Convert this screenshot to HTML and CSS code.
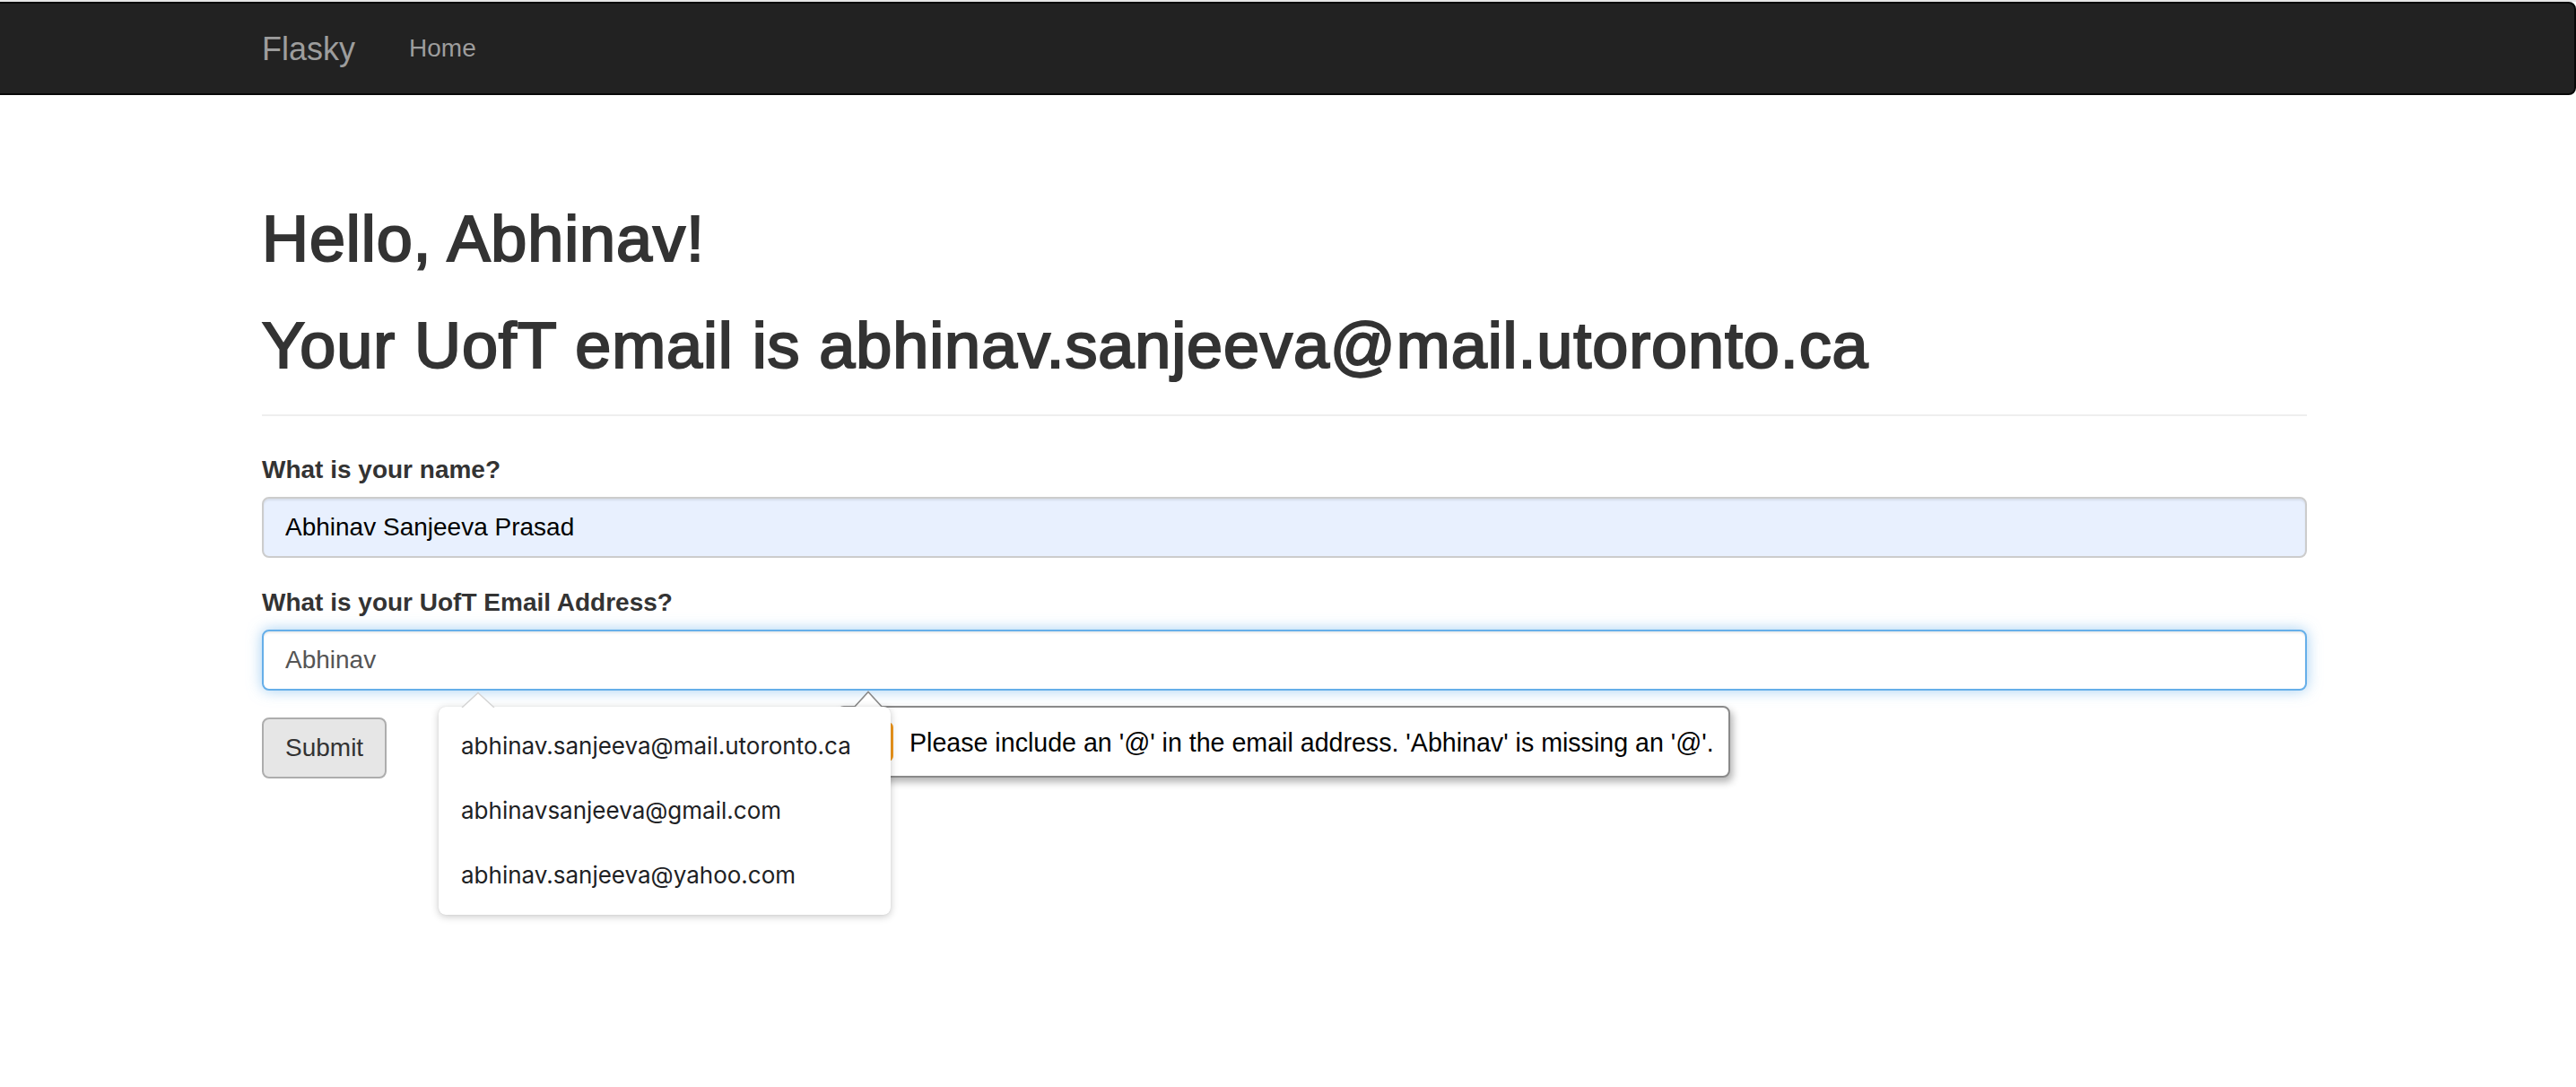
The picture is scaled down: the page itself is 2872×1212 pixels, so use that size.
FILE: index.html
```
<!DOCTYPE html>
<html lang="en">
<head>
<meta charset="utf-8">
<title>Flasky</title>
<link rel="stylesheet" href="styles.css">
</head>
<body>
<div class="topline"></div>
<nav class="navbar">
  <div class="nav-inner">
    <a class="brand" href="#">Flasky</a>
    <a class="nav-link" href="#">Home</a>
  </div>
</nav>
<main class="container">
  <div class="page-header">
    <h1>Hello, Abhinav!</h1>
    <h1>Your UofT email is abhinav.sanjeeva@mail.utoronto.ca</h1>
  </div>
  <form class="form">
    <div class="form-group">
      <label class="label">What is your name?</label>
      <input class="form-control autofilled" type="text" value="Abhinav Sanjeeva Prasad">
    </div>
    <div class="form-group email-group">
      <label class="label">What is your UofT Email Address?</label>
      <input class="form-control focused" type="text" value="Abhinav">
      <div class="bubble">
        <svg class="bubble-arrow" width="36" height="20" viewBox="0 0 36 20"><path d="M1 20 L18 1.5 L35 20" fill="#fff" stroke="#8a8a8a" stroke-width="1.6"/></svg>
        <span class="bubble-icon">!</span>
        <span class="bubble-text">Please include an '@' in the email address. 'Abhinav' is missing an '@'.</span>
      </div>
      <div class="autocomplete">
        <svg class="ac-arrow" width="38" height="18" viewBox="0 0 38 18"><path d="M1 18 L19 1.5 L37 18" fill="#fff" stroke="#d4d4d4" stroke-width="1.4"/></svg>
        <div class="ac-item">abhinav.sanjeeva@mail.utoronto.ca</div>
        <div class="ac-item">abhinavsanjeeva@gmail.com</div>
        <div class="ac-item">abhinav.sanjeeva@yahoo.com</div>
      </div>
    </div>
    <button class="btn" type="button">Submit</button>
  </form>
</main>
</body>
</html>
```
FILE: styles.css
```
html, body {
  margin: 0;
  padding: 0;
  background: #fff;
}
body {
  min-height: 1212px;
  font-family: "Liberation Sans", Arial, sans-serif;
  color: #333;
}
.topline {
  height: 2px;
  background: #e6e6e6;
}
.navbar {
  margin-left: -10px;
  height: 100px;
  background: #222;
  border: 2px solid #080808;
  border-radius: 8px;
  display: flex;
}
.nav-inner {
  margin-left: 300px;
  display: flex;
  align-items: flex-start;
}
.brand {
  display: block;
  padding: 31px 30px 29px 0;
  font-size: 36px;
  line-height: 40px;
  color: #9d9d9d;
  text-decoration: none;
}
.nav-link {
  display: block;
  padding: 30px;
  font-size: 28px;
  line-height: 40px;
  color: #9d9d9d;
  text-decoration: none;
}
.container {
  width: 2280px;
  padding-right: 8px;
  margin: 0 auto;
}
.page-header {
  padding-top: 121px;
  padding-bottom: 37px;
  border-bottom: 2px solid #eee;
  margin-bottom: 40px;
  display: flex;
  flex-direction: column;
  gap: 40px;
}
.page-header h1 {
  margin: 0;
  font-size: 72px;
  line-height: 79px;
  font-weight: 400;
  color: #333;
  letter-spacing: 0.9px;
  -webkit-text-stroke: 2.2px #333;
}
.form {
  display: flex;
  flex-direction: column;
  align-items: flex-start;
}
.form-group {
  display: flex;
  flex-direction: column;
  align-self: stretch;
  margin-bottom: 30px;
}
.label {
  font-weight: 700;
  font-size: 28px;
  line-height: 40px;
  margin-bottom: 10px;
  color: #333;
}
.form-control {
  box-sizing: border-box;
  width: 100%;
  height: 68px;
  margin: 0;
  padding: 12px 24px;
  font-family: "Liberation Sans", Arial, sans-serif;
  font-size: 28px;
  line-height: 40px;
  color: #555;
  background: #fff;
  border: 2px solid #ccc;
  border-radius: 8px;
  outline: none;
  box-shadow: inset 0 2px 2px rgba(0, 0, 0, 0.075);
}
.autofilled {
  background: #e8f0fe;
  color: #000;
}
.focused {
  border-color: #66afe9;
  box-shadow: inset 0 2px 2px rgba(0, 0, 0, 0.075), 0 0 16px rgba(102, 175, 233, 0.6);
}
.email-group {
  position: relative;
}
.btn {
  box-sizing: border-box;
  height: 68px;
  padding: 12px 24px;
  font-family: "Liberation Sans", Arial, sans-serif;
  font-size: 28px;
  line-height: 40px;
  color: #333;
  background: #e6e6e6;
  border: 2px solid #adadad;
  border-radius: 8px;
}
.autocomplete {
  position: absolute;
  z-index: 2;
  top: calc(100% + 18px);
  left: 197px;
  width: 504px;
  box-sizing: border-box;
  padding: 8px 0;
  background: #fff;
  border-radius: 8px;
  box-shadow: 0 2px 8px rgba(0, 0, 0, 0.22), 0 0 1px rgba(0, 0, 0, 0.15);
}
.ac-arrow {
  position: absolute;
  top: -17px;
  left: 25px;
  display: block;
}
.ac-item {
  padding-left: 25px;
  font-family: Inter, "Liberation Sans", sans-serif;
  font-size: 26px;
  line-height: 72px;
  color: #202124;
  white-space: nowrap;
}
.bubble {
  position: absolute;
  z-index: 1;
  top: calc(100% + 17px);
  left: 641px;
  width: 996px;
  height: 80px;
  box-sizing: border-box;
  display: flex;
  align-items: center;
  padding-left: 17px;
  background: #fff;
  border: 2px solid #8a8a8a;
  border-radius: 8px;
  box-shadow: 3px 5px 8px rgba(0, 0, 0, 0.3);
}
.bubble-arrow {
  position: absolute;
  top: -19px;
  left: 15px;
  display: block;
}
.bubble-icon {
  width: 44px;
  height: 44px;
  border-radius: 6px;
  background: #f29a1e;
  color: #fff;
  font-weight: 700;
  font-size: 30px;
  display: flex;
  align-items: center;
  justify-content: center;
  margin-right: 18px;
}
.bubble-text {
  font-family: "Liberation Sans", Arial, sans-serif;
  font-size: 28.6px;
  line-height: 40px;
  color: #000;
  white-space: nowrap;
  margin-top: 2px;
}
```
